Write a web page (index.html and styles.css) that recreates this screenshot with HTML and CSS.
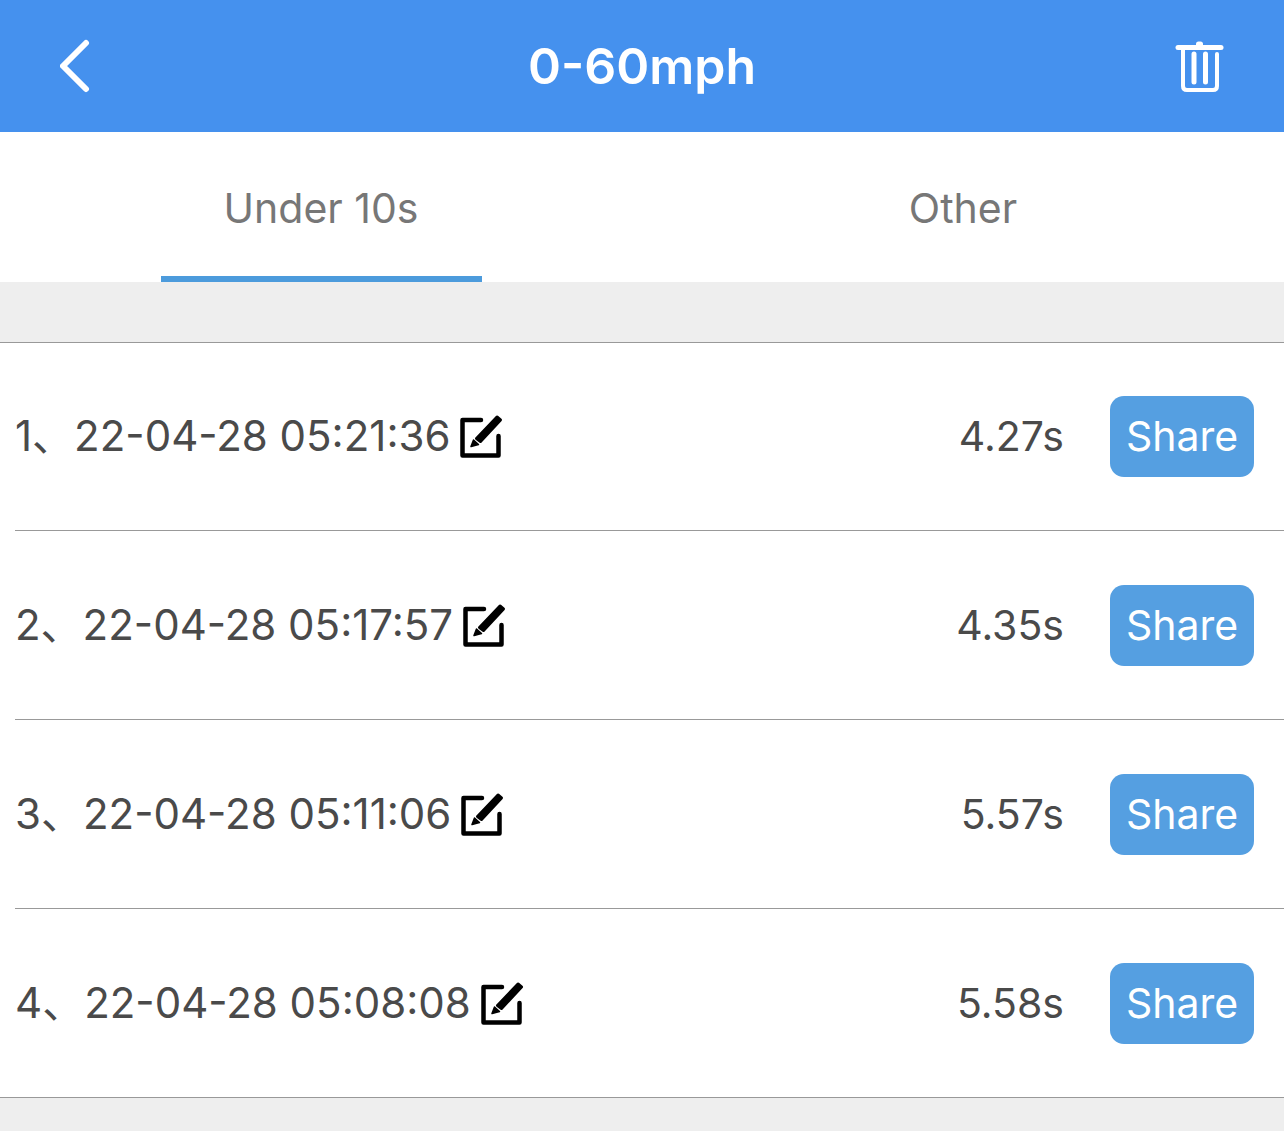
FILE: index.html
```html
<!DOCTYPE html>
<html lang="en">
<head>
    <meta charset="UTF-8">
    <meta name="viewport" content="width=device-width, initial-scale=1.0">
    <title>0-60mph</title>
    <link rel="stylesheet" href="styles.css">
</head>
<body>
    <!-- edit icon, shared by all rows -->
    <svg class="sprite" aria-hidden="true">
        <symbol id="edit" viewBox="0 0 44 44">
            <path d="M22 6H3.500V41.500H39.500V22" fill="none" stroke="#000" stroke-width="4.500" stroke-linecap="round" stroke-linejoin="round"/>
            <path d="M17.500 24.500L38 3L41.500 6L21.500 27.500z" stroke="#000" stroke-width="3" stroke-linejoin="round"/>
            <path d="M14.500 26L19.500 30.500L12 32.500z" stroke="#000" stroke-width="1.500" stroke-linejoin="round"/>
        </symbol>
    </svg>

    <header class="topbar">
        <button class="icon-btn" aria-label="Back">
            <svg width="32" height="54" viewBox="0 0 32 54" fill="none" stroke="#fff" stroke-width="6" stroke-linecap="round" stroke-linejoin="round">
                <path d="M26 4L3 27L26 50"/>
            </svg>
        </button>
        <h1>0-60mph</h1>
        <button class="icon-btn" aria-label="Delete">
            <svg width="50" height="54" viewBox="0 0 50 54" fill="none" stroke="#fff" stroke-width="4" stroke-linecap="round" stroke-linejoin="round">
                <path d="M4 8.500H47" stroke-width="5"/>
                <path d="M24.500 5H26.500V7H24.500z" stroke-width="5"/>
                <path d="M9 9V47Q9 51 13 51H39Q43 51 43 47V15"/>
                <path d="M20 15V43M31.500 15V43" stroke-width="5"/>
            </svg>
        </button>
    </header>

    <nav class="tabs">
        <button class="tab active">Under 10s</button>
        <button class="tab">Other</button>
    </nav>

    <ul class="records">
        <li>
            <span class="date">1、22-04-28 05:21:36</span>
            <button class="edit" aria-label="Edit"><svg><use href="#edit"/></svg></button>
            <span class="time">4.27s</span>
            <button class="share">Share</button>
        </li>
        <li>
            <span class="date">2、22-04-28 05:17:57</span>
            <button class="edit" aria-label="Edit"><svg><use href="#edit"/></svg></button>
            <span class="time">4.35s</span>
            <button class="share">Share</button>
        </li>
        <li>
            <span class="date">3、22-04-28 05:11:06</span>
            <button class="edit" aria-label="Edit"><svg><use href="#edit"/></svg></button>
            <span class="time">5.57s</span>
            <button class="share">Share</button>
        </li>
        <li>
            <span class="date">4、22-04-28 05:08:08</span>
            <button class="edit" aria-label="Edit"><svg><use href="#edit"/></svg></button>
            <span class="time">5.58s</span>
            <button class="share">Share</button>
        </li>
    </ul>
</body>
</html>
```
FILE: styles.css
```css
* {
    box-sizing: border-box;
}
body {
    font-family: Inter, "Noto Sans CJK SC", sans-serif;
    font-size: 41px;
    line-height: 52px;
    color: #4a4a4a;
    background-color: #eee;
    margin: 0;
}
button {
    font: inherit;
    padding: 0;
    border: none;
    background: none;
    cursor: pointer;
}
svg {
    display: block;
}
.sprite {
    position: absolute;
    width: 0;
    height: 0;
}
.topbar {
    display: flex;
    align-items: center;
    justify-content: space-between;
    height: 132px;
    padding: 0 60px;
    background-color: #4591ee;
    color: #fff;
}
.topbar h1 {
    margin: 0;
    font-size: 50px;
    font-weight: 600;
}
.icon-btn {
    display: flex;
    width: 50px;
}
.tabs {
    display: flex;
    background-color: #fff;
}
.tab {
    flex: 1;
    display: flex;
    flex-direction: column;
    align-items: center;
    height: 150px;
    padding-top: 50px;
    color: #777;
}
/* blue line under the selected tab */
.tab.active::after {
    content: "";
    width: 50%;
    height: 6px;
    margin-top: 42px;
    background-color: #4c9bdc;
}
.records {
    list-style: none;
    margin: 60px 0 0;
    padding: 0 0 0 15px;
    background-color: #fff;
    box-shadow: inset 0 1px #999, inset 0 -1px #999;
}
.records li {
    display: flex;
    align-items: center;
    height: 189px;
    padding-right: 30px;
    border-bottom: 1px solid #999;
}
.date {
    font-size: 42px;
}
.edit {
    margin-left: 9px;
}
.edit svg {
    width: 44px;
    height: 44px;
}
.time {
    margin-left: auto;
}
.share {
    width: 144px;
    height: 81px;
    margin-left: 46px;
    border-radius: 14px;
    background-color: #559fe1;
    color: #fff;
}
```
